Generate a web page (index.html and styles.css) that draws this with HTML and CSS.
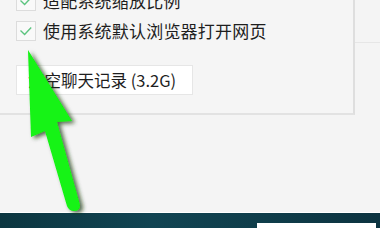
FILE: index.html
```html
<!DOCTYPE html>
<html lang="zh-CN">
<head>
<meta charset="utf-8">
<link rel="stylesheet" href="styles.css">
</head>
<body>
<div class="screen">
  <div class="top">
    <div class="panel">
      <div class="options">
        <div class="row">
          <span class="check"><svg viewBox="0 0 18 18" width="18" height="18"><path d="M3.5 8.6 L7.6 12.4 L14.2 5.6" fill="none" stroke="#5cc47f" stroke-width="1.4"/></svg></span>
          <span class="label">适配系统缩放比例</span>
        </div>
        <div class="row">
          <span class="check"><svg viewBox="0 0 18 18" width="18" height="18"><path d="M3.5 8.6 L7.6 12.4 L14.2 5.6" fill="none" stroke="#5cc47f" stroke-width="1.4"/></svg></span>
          <span class="label">使用系统默认浏览器打开网页</span>
        </div>
      </div>
      <div class="btn">清空聊天记录 (3.2G)</div>
    </div>
    <div class="side"><div class="side-line"></div></div>
  </div>
  <div class="lower"></div>
  <div class="desk"><div class="desk-box"></div></div>
  <svg class="arrow" viewBox="0 0 380 228" width="380" height="228">
    <defs>
      <filter id="sh" x="-50%" y="-50%" width="200%" height="200%">
        <feDropShadow dx="3" dy="2" stdDeviation="2.2" flood-color="#1b3a12" flood-opacity="0.75"/>
      </filter>
    </defs>
    <path filter="url(#sh)" fill="#12f312" d="M28 50 L72 121 L57 122 L80 205 Q80 211 74 211 Q69 211 67 206 L45 131 L31 137 Z"/>
  </svg>
</div>
</body>
</html>
```
FILE: styles.css
```css
* { box-sizing: border-box; }
html, body { margin: 0; padding: 0; }
body {
  width: 380px;
  height: 228px;
  overflow: hidden;
  background: #f4f4f4;
  font-family: "Noto Sans CJK SC", "Noto Sans", sans-serif;
}
.screen {
  position: relative;
  width: 380px;
  height: 228px;
  display: flex;
  flex-direction: column;
}
.top {
  display: flex;
  height: 115px;
  flex: none;
}
.panel {
  width: 355px;
  height: 115px;
  background: #f5f5f5;
  border-right: 2px solid #dedede;
  border-bottom: 2px solid #e2e2e2;
  padding-left: 16px;
  overflow: hidden;
}
.options {
  margin-top: -14px;
}
.row {
  height: 30px;
  display: flex;
  align-items: center;
  gap: 7px;
}
.check {
  width: 20px;
  height: 20px;
  border: 1px solid #dcdcdc;
  background: #f9f9f9;
  display: flex;
  align-items: center;
  justify-content: center;
}
.check svg { display: block; }
.label {
  font-size: 17px;
  color: #1e1e1e;
  line-height: 20px;
  letter-spacing: 0.2px;
}
.btn {
  margin-top: 19px;
  width: 177px;
  height: 30px;
  background: #fff;
  border: 1px solid #e6e6e6;
  padding-left: 11px;
  display: flex;
  align-items: center;
  font-size: 16.5px;
  color: #1e1e1e;
  white-space: nowrap;
}
.side {
  flex: 1;
  background: #f4f4f4;
  padding-top: 42px;
}
.side-line {
  height: 1px;
  background: #e6e6e6;
}
.lower {
  height: 98px;
  flex: none;
  background: #f4f4f4;
  border-bottom: 1px solid #ffffff;
}
.desk {
  flex: 1;
  background: linear-gradient(90deg, #0c3640 0%, #114452 40%, #0f3d4a 70%, #0c3340 100%);
  padding: 10px 4px 0 257px;
}
.desk-box {
  height: 10px;
  width: 119px;
  background: #fff;
}
.arrow {
  position: absolute;
  left: 0;
  top: 0;
  pointer-events: none;
}
```
